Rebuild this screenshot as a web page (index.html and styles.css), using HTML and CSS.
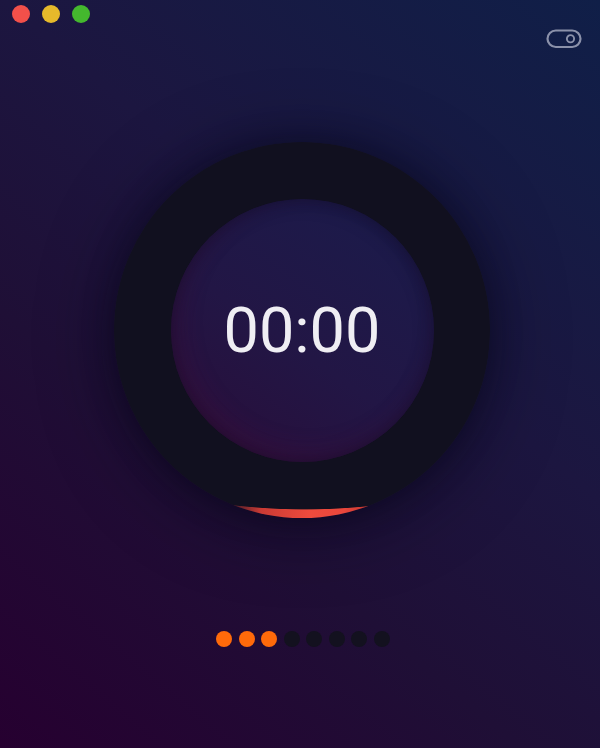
FILE: index.html
```html
<!DOCTYPE html>
<html lang="en">
<head>
<meta charset="utf-8">
<title>Timer</title>
<link rel="stylesheet" href="styles.css">
</head>
<body>
<div class="app">
  <header class="titlebar">
    <span class="light light-red"></span>
    <span class="light light-yellow"></span>
    <span class="light light-green"></span>
  </header>
  <div class="toolbar">
    <button class="toggle-btn" aria-label="Toggle">
      <svg width="36" height="20" viewBox="0 0 36 20" fill="none" stroke="#8b91aa" stroke-width="2.2">
        <rect x="1.5" y="1.5" width="33" height="16.5" rx="8.25"/>
        <circle cx="24.5" cy="9.75" r="3.6" stroke-width="1.9"/>
      </svg>
    </button>
  </div>
  <main class="main">
    <div class="dial">
      <div class="face">
        <span class="time">00:00</span>
      </div>
    </div>
    <div class="dots">
      <span class="dot on"></span>
      <span class="dot on"></span>
      <span class="dot on"></span>
      <span class="dot"></span>
      <span class="dot"></span>
      <span class="dot"></span>
      <span class="dot"></span>
      <span class="dot"></span>
    </div>
  </main>
</div>
</body>
</html>
```

FILE: styles.css
```css
* { box-sizing: border-box; }
html, body { margin: 0; padding: 0; }
body {
  width: 600px;
  height: 748px;
  overflow: hidden;
  font-family: Roboto, "Open Sans", "Liberation Sans", sans-serif;
  background: linear-gradient(40deg, #260030 0%, #1f0f36 35%, #1c1640 60%, #101f48 100%);
}
.app {
  height: 748px;
  display: flex;
  flex-direction: column;
}
.titlebar {
  height: 28px;
  display: flex;
  align-items: center;
  gap: 12px;
  padding: 0 0 0 12px;
}
.light {
  width: 18px;
  height: 18px;
  border-radius: 50%;
  display: block;
}
.light-red { background: #f2504a; }
.light-yellow { background: #e6b92b; }
.light-green { background: #44b82e; }
.toolbar {
  display: flex;
  justify-content: flex-end;
  padding: 0 18px 0 0;
  margin-top: 1px;
}
.toggle-btn {
  border: 0;
  background: transparent;
  padding: 0;
  width: 36px;
  height: 20px;
  display: block;
}
.toggle-btn svg { display: block; }
.main {
  flex: 1;
  display: flex;
  flex-direction: column;
  align-items: center;
  padding: 93px 0 0 4px;
}
.dial {
  width: 376px;
  height: 376px;
  border-radius: 50%;
  display: flex;
  align-items: center;
  justify-content: center;
  background:
    radial-gradient(circle 612px at 191px -244.2px, #11101f 611.2px, rgba(17,16,31,0) 612px),
    linear-gradient(90deg, #2a1424 30%, #c93a34 39%, #ee4b3d 52%, #ea473c 61%, #c2372f 68%, #2a1424 74%);
  box-shadow: 0 8px 70px rgba(6, 5, 22, 0.55), 0 0 30px rgba(6, 5, 22, 0.35);
}
.face {
  width: 263px;
  height: 263px;
  border-radius: 50%;
  display: flex;
  align-items: center;
  justify-content: center;
  background: linear-gradient(35deg, #2a0d39 0%, #221645 45%, #1a1c4c 100%);
  box-shadow:
    inset 0 0 18px rgba(8, 6, 25, 0.55),
    inset 8px -10px 24px rgba(120, 20, 70, 0.18);
}
.time {
  color: #efeef3;
  font-size: 63px;
  font-weight: 400;
  letter-spacing: 0;
  line-height: 1;
}
.dots {
  display: flex;
  gap: 6.6px;
  margin-top: 113px;
  padding-left: 2px;
}
.dot {
  width: 16px;
  height: 16px;
  border-radius: 50%;
  background: #13111f;
  display: block;
}
.dot.on { background: #ff6a0a; }
```
